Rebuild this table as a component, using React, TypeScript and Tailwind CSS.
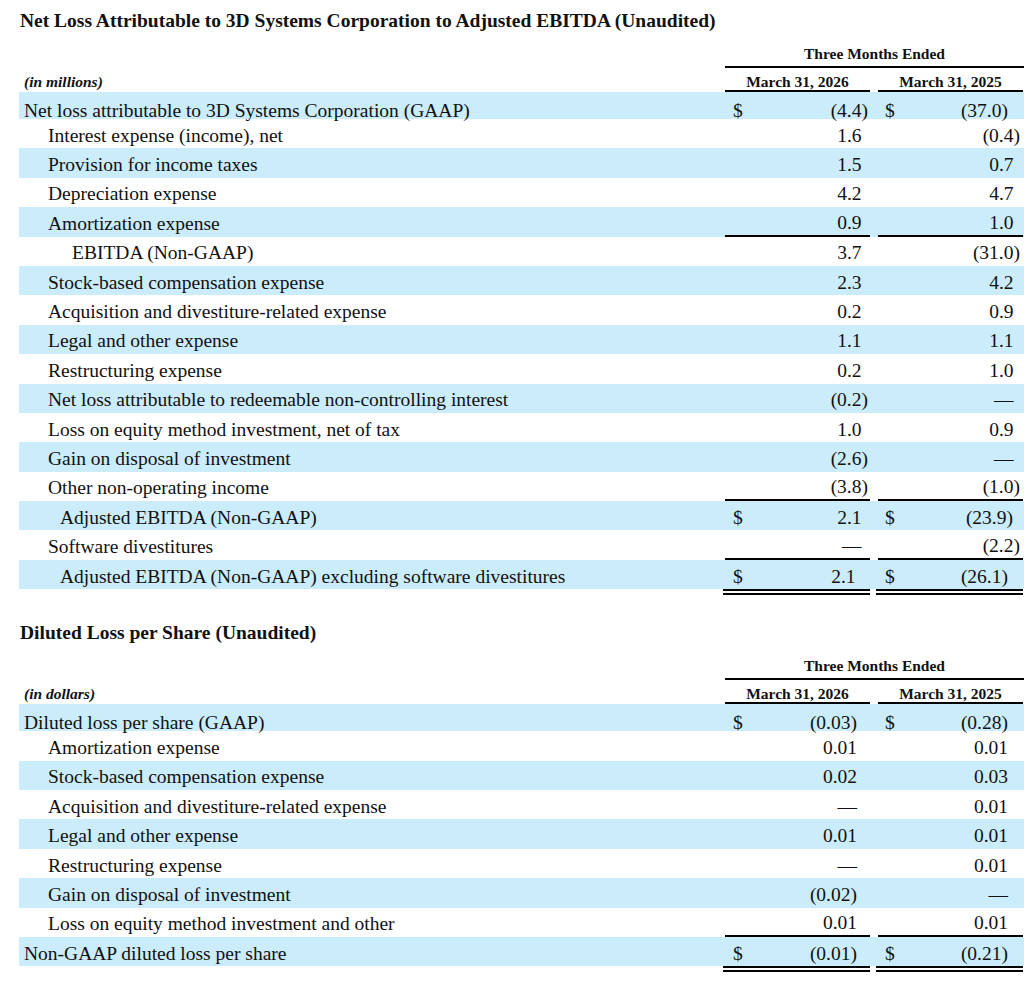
import clsx from "clsx";

type Row = {
  label: string;
  indent: string;
  a: string;
  b: string;
  dollar?: boolean;
  rule?: boolean;
  padA?: string;
  padB?: string;
};

const ebitdaRows: Row[] = [
  { label: "Net loss attributable to 3D Systems Corporation (GAAP)", indent: "pl-[5px]", a: "(4.4)", b: "(37.0)", dollar: true, padB: "pr-[15px]" },
  { label: "Interest expense (income), net", indent: "pl-[29px]", a: "1.6", b: "(0.4)" },
  { label: "Provision for income taxes", indent: "pl-[29px]", a: "1.5", b: "0.7" },
  { label: "Depreciation expense", indent: "pl-[29px]", a: "4.2", b: "4.7" },
  { label: "Amortization expense", indent: "pl-[29px]", a: "0.9", b: "1.0", rule: true },
  { label: "EBITDA (Non-GAAP)", indent: "pl-[53px]", a: "3.7", b: "(31.0)" },
  { label: "Stock-based compensation expense", indent: "pl-[29px]", a: "2.3", b: "4.2" },
  { label: "Acquisition and divestiture-related expense", indent: "pl-[29px]", a: "0.2", b: "0.9" },
  { label: "Legal and other expense", indent: "pl-[29px]", a: "1.1", b: "1.1" },
  { label: "Restructuring expense", indent: "pl-[29px]", a: "0.2", b: "1.0" },
  { label: "Net loss attributable to redeemable non-controlling interest", indent: "pl-[29px]", a: "(0.2)", b: "—" },
  { label: "Loss on equity method investment, net of tax", indent: "pl-[29px]", a: "1.0", b: "0.9" },
  { label: "Gain on disposal of investment", indent: "pl-[29px]", a: "(2.6)", b: "—" },
  { label: "Other non-operating income", indent: "pl-[29px]", a: "(3.8)", b: "(1.0)", rule: true },
  { label: "Adjusted EBITDA (Non-GAAP)", indent: "pl-[41px]", a: "2.1", b: "(23.9)", dollar: true, padB: "pr-[10px]" },
  { label: "Software divestitures", indent: "pl-[29px]", a: "—", b: "(2.2)", rule: true },
  { label: "Adjusted EBITDA (Non-GAAP) excluding software divestitures", indent: "pl-[41px]", a: "2.1", b: "(26.1)", dollar: true, padA: "pr-[8px]", padB: "pr-[15px]" },
];

const epsRows: Row[] = [
  { label: "Diluted loss per share (GAAP)", indent: "pl-[5px]", a: "(0.03)", b: "(0.28)", dollar: true },
  { label: "Amortization expense", indent: "pl-[29px]", a: "0.01", b: "0.01" },
  { label: "Stock-based compensation expense", indent: "pl-[29px]", a: "0.02", b: "0.03" },
  { label: "Acquisition and divestiture-related expense", indent: "pl-[29px]", a: "—", b: "0.01" },
  { label: "Legal and other expense", indent: "pl-[29px]", a: "0.01", b: "0.01" },
  { label: "Restructuring expense", indent: "pl-[29px]", a: "—", b: "0.01" },
  { label: "Gain on disposal of investment", indent: "pl-[29px]", a: "(0.02)", b: "—" },
  { label: "Loss on equity method investment and other", indent: "pl-[29px]", a: "0.01", b: "0.01", rule: true },
  { label: "Non-GAAP diluted loss per share", indent: "pl-[5px]", a: "(0.01)", b: "(0.21)", dollar: true },
];

function Value({
  value,
  dollar,
  rule,
  align,
  dollarPad,
  pad,
  hang,
}: {
  value: string;
  dollar?: boolean;
  rule?: boolean;
  align: string;
  dollarPad: string;
  pad: string;
  hang: boolean;
}) {
  return (
    <div className={clsx("flex w-[145px] shrink-0 self-stretch justify-between", align, rule && "border-b-2 border-black")}>
      <span className={dollarPad}>{dollar ? "$" : ""}</span>
      <span className={pad}>
        {value}
        {hang && !value.endsWith(")") && <span className="invisible">)</span>}
      </span>
    </div>
  );
}

function Table({
  title,
  unit,
  rows,
  hang,
  padA,
  padB,
}: {
  title: string;
  unit: string;
  rows: Row[];
  hang: boolean;
  padA: string;
  padB: string;
}) {
  return (
    <div>
      <h2 className="pl-[20px] text-[19.5px] font-bold leading-[24px]">{title}</h2>

      <div className="ml-[19px] flex h-[35px] w-[1005px] items-end">
        <div className="w-[706px] shrink-0" />
        <div className="w-[299px] border-b-2 border-black pb-[3px] text-center text-[15.5px] font-bold leading-[18px]">
          Three Months Ended
        </div>
      </div>

      <div className="ml-[19px] flex h-[24px] w-[1005px] items-end text-[15.5px] font-bold leading-[16px]">
        <div className="w-[706px] shrink-0 pl-[5px] pb-[2px] italic">{unit}</div>
        <div className="w-[145px] shrink-0 border-b-2 border-black text-center">March 31, 2026</div>
        <div className="w-[8px] shrink-0" />
        <div className="w-[145px] shrink-0 border-b-2 border-black text-center">March 31, 2025</div>
      </div>

      {rows.map((r, i) => {
        const first = i === 0;
        const align = first ? "items-start pt-[9px]" : "items-center pt-[4px]";
        return (
          <div
            key={r.label}
            className={clsx(
              "ml-[19px] flex w-[1005px] text-[19.5px] leading-[20px]",
              first ? "h-[27px]" : "h-[29.4px]",
              i % 2 === 0 ? "bg-[#cbecfa]" : "bg-white"
            )}
          >
            <div className={clsx("flex w-[706px] shrink-0 self-stretch whitespace-nowrap", align, r.indent)}>{r.label}</div>
            <Value
              value={r.a}
              dollar={r.dollar}
              rule={r.rule}
              align={align}
              dollarPad="pl-[8px]"
              pad={r.padA ?? padA}
              hang={hang}
            />
            <div className="w-[8px] shrink-0" />
            <Value
              value={r.b}
              dollar={r.dollar}
              rule={r.rule}
              align={align}
              dollarPad="pl-[7px]"
              pad={r.padB ?? padB}
              hang={hang}
            />
          </div>
        );
      })}

      <div className="ml-[19px] flex h-[6px] w-[1005px]">
        <div className="w-[704px] shrink-0" />
        <div className="w-[147px] shrink-0 border-b-[6px] border-double border-black" />
        <div className="w-[6px] shrink-0" />
        <div className="w-[147px] shrink-0 border-b-[6px] border-double border-black" />
      </div>
    </div>
  );
}

export default function App() {
  return (
    <div className="h-[991px] w-[1024px] overflow-hidden bg-white pt-[9px] font-['Liberation_Serif','Times_New_Roman',serif] text-[#111]">
      <Table
        title="Net Loss Attributable to 3D Systems Corporation to Adjusted EBITDA (Unaudited)"
        unit="(in millions)"
        rows={ebitdaRows}
        hang
        padA="pr-[2px]"
        padB="pr-[3px]"
      />
      <div className="h-[26px]" />
      <Table
        title="Diluted Loss per Share (Unaudited)"
        unit="(in dollars)"
        rows={epsRows}
        hang={false}
        padA="pr-[13px]"
        padB="pr-[15px]"
      />
    </div>
  );
}
